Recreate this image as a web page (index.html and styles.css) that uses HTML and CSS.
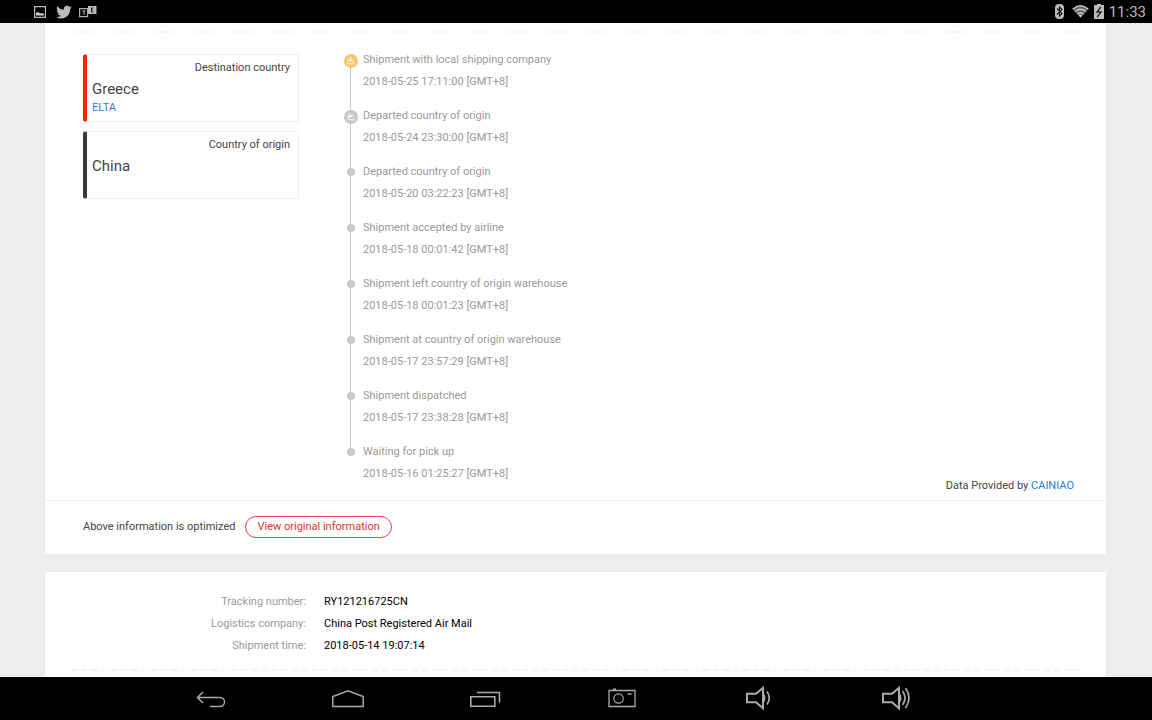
FILE: index.html
```html
<!DOCTYPE html>
<html lang="en">
<head>
<meta charset="UTF-8" />
<meta name="viewport" content="width=device-width, initial-scale=1" />
<title>Shipment tracking</title>
<link rel="stylesheet" href="styles.css">
</head>
<body>

<header class="status-bar">
  <div class="status-group">
    <svg width="12" height="12" viewBox="0 0 12 12"><path d="M.6.6h10.8v10.8H.6z" fill="none" stroke="#bbb" stroke-width="1.200"/><path d="M2 9.500V7l2-1 2 1.500 2-.5 2 1v1.500z" fill="#ccc"/></svg>
    <svg class="status-bird" width="16" height="16" viewBox="0 0 24 24"><path fill="#bbb" d="M23.6 4.9c-.8.4-1.700.6-2.700.8 1-.6 1.700-1.500 2.100-2.600-.9.5-1.900.9-3 1.100a4.800 4.800 0 0 0-8.200 4.400C7.800 8.400 4.200 6.500 1.800 3.500c-1.300 2.200-.7 5 1.500 6.400-.8 0-1.500-.2-2.200-.6 0 2.300 1.600 4.300 3.800 4.800-.7.2-1.400.2-2.100.1.600 1.900 2.400 3.300 4.500 3.300A9.600 9.600 0 0 1 .2 19.500 13.600 13.600 0 0 0 21.200 7.400c.9-.7 1.700-1.500 2.400-2.500z"/></svg>
    <svg width="18" height="13" viewBox="0 0 18 13"><path d="M.6 3.600h8v8h-8z" fill="none" stroke="#aaa" stroke-width="1.200"/><path d="M9 1h8.500v8H9z" fill="#bbb"/><path d="M3.500 6h3M5 6v4" stroke="#bbb"/><path d="M14.500 3h-2v4h2M12 5h2" stroke="#222" fill="none"/></svg>
  </div>
  <div class="status-group status-system">
    <svg width="9" height="15" viewBox="0 0 9 15"><rect width="9" height="15" rx="4" fill="#bbb"/><path d="M2 4.500l5 5-2.500 2.500V3L7 5.500l-5 5" fill="none" stroke="#111" stroke-width="1.100"/></svg>
    <svg class="status-wifi" width="17" height="13" viewBox="0 0 17 13"><path d="M.5 4Q8.500-3 16.500 4L8.500 12.500z" fill="#666"/><path d="M.7 4.200Q8.500-2.500 16.300 4.200M3 6.700Q8.500 2 14 6.700M5.300 9.200Q8.500 6.500 11.700 9.200" fill="none" stroke="#ccc" stroke-width="1.400"/><path d="M6.500 10.300Q8.500 9 10.500 10.300L8.500 12.500z" fill="#ccc"/></svg>
    <svg width="10" height="15" viewBox="0 0 10 15"><path d="M3 0h4v1h3v14H0V1h3z" fill="#bbb"/><path d="M6.800 3L3 8h4l-3.800 5" fill="none" stroke="#222" stroke-width="1.300"/></svg>
    <time class="clock">11:33</time>
  </div>
</header>

<main class="page">
  <section class="card tracking">
    <div class="divider"></div>
    <div class="tracking-body">
      <div class="countries">
        <div class="country country-destination">
          <div class="country-label">Destination country</div>
          <div class="country-name">Greece</div>
          <a class="link" href="#">ELTA</a>
        </div>
        <div class="country country-origin">
          <div class="country-label">Country of origin</div>
          <div class="country-name">China</div>
        </div>
      </div>

      <ol class="timeline">
        <li class="event">
          <span class="marker">
            <svg width="14" height="14" viewBox="0 0 36 36"><circle cx="18" cy="18" r="18" fill="#fdc56c"/><path transform="translate(5 5)" fill="#fff" d="M3 18.500h20v3H3zM19.340 15.850c.8.210 1.620-.26 1.840-1.060.21-.8-.26-1.620-1.060-1.840l-5.310-1.420-2.760-9.020L10.120 2v8.280L5.150 8.950l-.93-2.320-1.450-.39v5.170z"/></svg>
          </span>
          <div>Shipment with local shipping company</div>
          <div>2018-05-25 17:11:00 [GMT+8]</div>
        </li>
        <li class="event">
          <span class="marker">
            <svg width="14" height="14" viewBox="0 0 36 36"><circle cx="18" cy="18" r="18" fill="#c8c8c8"/><path transform="translate(5 5)" fill="#fff" d="M3 18.500h20v3H3zM22.070 9.640c-.21-.8-1.040-1.280-1.840-1.060L14.920 10l-6.900-6.430-1.930.51 4.140 7.170-4.970 1.330-1.970-1.540-1.450.39 2.590 4.490z"/></svg>
          </span>
          <div>Departed country of origin</div>
          <div>2018-05-24 23:30:00 [GMT+8]</div>
        </li>
        <li class="event">
          <span class="marker dot"></span>
          <div>Departed country of origin</div>
          <div>2018-05-20 03:22:23 [GMT+8]</div>
        </li>
        <li class="event">
          <span class="marker dot"></span>
          <div>Shipment accepted by airline</div>
          <div>2018-05-18 00:01:42 [GMT+8]</div>
        </li>
        <li class="event">
          <span class="marker dot"></span>
          <div>Shipment left country of origin warehouse</div>
          <div>2018-05-18 00:01:23 [GMT+8]</div>
        </li>
        <li class="event">
          <span class="marker dot"></span>
          <div>Shipment at country of origin warehouse</div>
          <div>2018-05-17 23:57:29 [GMT+8]</div>
        </li>
        <li class="event">
          <span class="marker dot"></span>
          <div>Shipment dispatched</div>
          <div>2018-05-17 23:38:28 [GMT+8]</div>
        </li>
        <li class="event">
          <span class="marker dot"></span>
          <div>Waiting for pick up</div>
          <div>2018-05-16 01:25:27 [GMT+8]</div>
        </li>
      </ol>

      <div class="provider">Data Provided by <a class="link" href="#">CAINIAO</a></div>
    </div>
    <div class="tracking-footer">
      <span>Above information is optimized</span>
      <button class="original-button" type="button">View original information</button>
    </div>
  </section>

  <section class="card order">
    <dl class="details">
      <dt>Tracking number:</dt><dd>RY121216725CN</dd>
      <dt>Logistics company:</dt><dd>China Post Registered Air Mail</dd>
      <dt>Shipment time:</dt><dd>2018-05-14 19:07:14</dd>
    </dl>
    <div class="divider"></div>
  </section>
</main>

<nav class="nav-bar">
  <button class="nav-button" type="button" aria-label="Back">
    <svg width="32" height="24" viewBox="0 0 32 24"><path d="M2 10.500h23a4.500 4.500 0 0 1 0 9H15M8 5L2.500 10.500 8 16" fill="none" stroke="#aaa" stroke-width="1.500"/></svg>
  </button>
  <button class="nav-button" type="button" aria-label="Home">
    <svg width="34" height="24" viewBox="0 0 34 24"><path d="M1.800 19.500V9.500L17 3.800l15.200 5.700v10z" fill="none" stroke="#aaa" stroke-width="1.500"/></svg>
  </button>
  <button class="nav-button" type="button" aria-label="Recent apps">
    <svg width="32" height="24" viewBox="0 0 32 24"><path d="M1.800 9.800h24v9.500h-24zM8 5.500h22.500v10" fill="none" stroke="#aaa" stroke-width="1.600"/></svg>
  </button>
  <button class="nav-button" type="button" aria-label="Screenshot">
    <svg width="28" height="24" viewBox="0 0 28 24"><path d="M1 3.500h26v16H1z" fill="none" stroke="#aaa" stroke-width="1.300"/><circle cx="10.500" cy="11.500" r="4.700" fill="none" stroke="#aaa" stroke-width="1.200"/><path d="M5 2.300h3M19.500 7h4" stroke="#aaa" stroke-width="1.500"/></svg>
  </button>
  <button class="nav-button" type="button" aria-label="Volume down">
    <svg width="28" height="26" viewBox="0 0 28 26"><path d="M2 7.800h9l7-6v20.500l-7-6H2z" fill="none" stroke="#aaa" stroke-width="2"/><path d="M18.500 6.500q4 5.500 0 11z" fill="#aaa"/><path d="M22 5.500q4.500 6.500 0 13" fill="none" stroke="#aaa" stroke-width="1.700"/></svg>
  </button>
  <button class="nav-button" type="button" aria-label="Volume up">
    <svg width="32" height="26" viewBox="0 0 32 26"><path d="M3 7.800h9l7-6v20.500l-7-6H3z" fill="none" stroke="#aaa" stroke-width="2"/><path d="M19.500 6.500q4 5.500 0 11z" fill="#aaa"/><path d="M22.500 5q5 7 0 14M25.500 2q7 10 0 20" fill="none" stroke="#aaa" stroke-width="1.700"/></svg>
  </button>
</nav>

</body>
</html>
```
FILE: styles.css
```css
* {
  box-sizing: border-box;
}
body {
  margin: 0;
  height: 100vh;
  display: flex; flex-direction: column;
  background: #ededed;
  font-family: Roboto, sans-serif;
  font-size: 11px;
  line-height: 22px;
  color: #444;
}
svg {
  display: block;
}

/* status bar */
.status-bar {
  flex: none;
  height: 23px;
  padding: 0 6px 0 34px;
  display: flex;
  justify-content: space-between;
  align-items: center;
  background: #000;
}
.status-group {
  display: flex;
  align-items: center;
  gap: 7px;
}
.status-system {
  gap: 5px;
}
.status-bird {
  margin-left: 3px;
}
.status-wifi {
  margin-left: 3px;
}
.clock {
  font-size: 15px;
  color: #bbb;
}

/* page */
.page {
  flex: 1;
  min-height: 0;
  padding: 0 46px 0 45px;
  display: flex; flex-direction: column;
  gap: 18px;
  overflow: hidden;
}
.card {
  flex: none;
  background: #fff;
}
.divider {
  margin: 0 26px;
  border-top: 2px dashed #f5f5f5;
}
.tracking {
  padding-top: 8px;
}
.tracking-body {
  display: flex;
  gap: 44px;
  padding: 16px 32px 3px 38px;
}
.countries {
  flex: 0 0 216px;
  padding-top: 5px;
  display: flex; flex-direction: column;
  gap: 9px;
}
.country {
  height: 68px;
  padding: 2px 8px 0 5px;
  border: 1px solid #eee;
  border-left: 4px solid #3a3a3a;
  border-radius: 3px;
}
.country-destination {
  border-left-color: #e62e04;
}
.country-label {
  text-align: right;
}
.country-name {
  font-size: 15px;
  line-height: 20px;
}
.country .link {
  display: block;
  line-height: 18px;
}
.link {
  color: #1a7fdb;
  text-decoration: none;
}

/* timeline */
.timeline {
  flex: 1;
  margin: 0;
  padding: 0 0 12px;
  list-style: none;
  color: #999;
}
.event {
  position: relative;
  padding: 0 0 12px 20px;
}
.event::before {
  content: "";
  position: absolute;
  top: 12px; bottom: -12px; left: 7px;
  width: 1px;
  background: #c8c8c8;
}
.event:last-child {
  padding-bottom: 0;
}
.event:last-child::before {
  display: none;
}
.marker {
  position: absolute;
  top: 5px; left: 1px;
}
.dot {
  top: 7px; left: 4px;
  width: 8px; height: 8px;
  border-radius: 50%;
  background: #c8c8c8;
}
.provider {
  align-self: flex-end;
}
.tracking-footer {
  display: flex;
  align-items: center;
  gap: 10px;
  padding: 15px 38px 16px;
  border-top: 1px solid #eee;
}
.original-button {
  padding: 0 11px;
  border: 1px solid #e64545;
  border-radius: 11px;
  background: #fff;
  font: inherit;
  line-height: 20px;
  color: #e03131;
  cursor: pointer;
}

/* order details */
.order {
  padding-bottom: 12px;
}
.details {
  display: grid;
  grid-template-columns: 261px 1fr;
  column-gap: 18px;
  margin: 0;
  padding: 19px 0 12px;
}
.details dt {
  text-align: right;
  color: #999;
}
.details dd {
  margin: 0;
  color: #000;
}

/* navigation bar */
.nav-bar {
  flex: none;
  height: 43px;
  padding: 0 188px 0 142px;
  display: flex;
  background: #000;
}
.nav-button {
  flex: 1;
  display: flex;
  justify-content: center;
  align-items: center;
  padding: 0;
  border: none;
  background: none;
  cursor: pointer;
}
```
